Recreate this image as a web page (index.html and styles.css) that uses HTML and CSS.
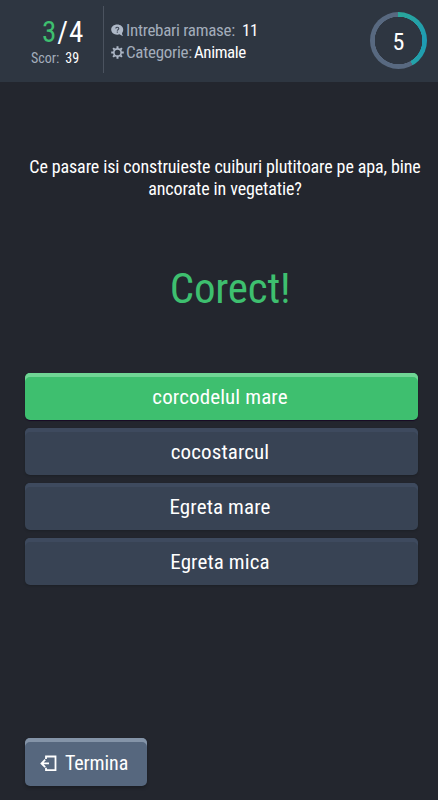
FILE: index.html
```html
<!DOCTYPE html>
<html lang="ro">
<head>
    <meta charset="UTF-8">
    <meta name="viewport" content="width=device-width, initial-scale=1.0">
    <title>Quiz</title>
    <link rel="stylesheet" href="styles.css">
</head>
<body>

    <header class="header">
        <div class="progress">
            <div class="count"><span class="current">3</span><span>/4</span></div>
            <div class="score"><span class="label">Scor:</span><span>39</span></div>
        </div>

        <div class="info">
            <div class="info-row">
                <svg class="icon" viewBox="0 0 13 13">
                    <path fill="#aeb8c7" d="M6.2.5C2.800.5.2 2.700.2 5.600s2.600 5.100 6 5.100c.9 0 1.700-.1 2.400-.4.9.9 2 1.500 3.600 1.500-.8-.7-1.200-1.500-1.200-2.600.8-.9 1.200-2.200 1.200-3.600C12.200 2.700 9.600.5 6.200.5z"/>
                    <path fill="none" stroke="#3d4654" stroke-width="1.1" d="M4.800 4.600c0-1.900 3-1.800 3 0 0 1.200-1.500 1-1.500 2.200M6.300 7.600v1.100"/>
                </svg>
                <span class="label">Intrebari ramase:</span>
                <span class="left">11</span>
            </div>
            <div class="info-row">
                <svg class="icon" viewBox="0 0 13 13">
                    <circle cx="6.5" cy="6.5" r="3.7" fill="none" stroke="#aeb8c7" stroke-width="1.7"/>
                    <path fill="none" stroke="#aeb8c7" stroke-width="2" d="M6.5.2v2M6.5 10.800v2M.2 6.500h2M10.800 6.500h2M2.100 2.100l1.400 1.400M9.500 9.500l1.400 1.400M2.100 10.900l1.400-1.400M9.500 3.500l1.400-1.400"/>
                </svg>
                <span class="label">Categorie:</span>
                <span class="name">Animale</span>
            </div>
        </div>

        <div class="timer">5</div>
    </header>

    <main class="quiz">
        <p class="question">Ce pasare isi construieste cuiburi plutitoare pe apa, bine<br>ancorate in vegetatie?</p>
        <h1 class="result">Corect!</h1>

        <div class="answers">
            <button class="answer correct">corcodelul mare</button>
            <button class="answer">cocostarcul</button>
            <button class="answer">Egreta mare</button>
            <button class="answer">Egreta mica</button>
        </div>

        <button class="finish">
            <svg class="exit" viewBox="0 0 17 17">
                <path fill="none" stroke="#fff" stroke-width="1.8" d="M6 4V1.500h9.500v13.700H6V12.700M9 8.400H1.500M5.200 4.700L1.500 8.400l3.700 3.700"/>
            </svg>
            <span>Termina</span>
        </button>
    </main>

</body>
</html>
```
FILE: styles.css
```css
* {
    box-sizing: border-box;
}
body {
    margin: 0;
    height: 800px;
    overflow: hidden;
    display: flex;
    flex-direction: column;
    background-color: #23262e;
    color: #fff;
    font-family: "Roboto Condensed", Roboto, sans-serif;
    font-stretch: 75%;
}
.header {
    display: flex;
    height: 82px;
    padding: 6px 11px 0 0;
    background-color: #2e3641;
}
.progress {
    width: 104px;
    height: 67px;
    padding: 8px 0 0 31px;
    border-right: 1px solid #4b535f;
}
.count {
    display: flex;
    padding-left: 11px;
    font-size: 29px;
    line-height: 36px;
    letter-spacing: 1px;
}
.current {
    color: #3ebf6f;
}
.score {
    display: flex;
    gap: 6px;
    font-size: 14px;
    line-height: 16px;
}
.label {
    color: #a3adbb;
}
.info {
    padding: 13px 0 0 7px;
    font-size: 17px;
    letter-spacing: -0.28px;
}
.info-row {
    display: flex;
    align-items: center;
    height: 22px;
}
.icon {
    width: 13px;
    height: 13px;
    margin-right: 2px;
}
.left {
    margin-left: 7px;
}
.name {
    margin-left: 2px;
    letter-spacing: -0.4px;
}
.timer {
    width: 57px;
    height: 57px;
    margin: 6px 0 0 auto;
    border-radius: 50%;
    background: radial-gradient(circle, #2e3641 23.5px, transparent 24px), conic-gradient(#2aa79a 0, #1e9bb4 90deg, #24a3a9 150deg, #586980 150deg);
    font-size: 24px;
    line-height: 60px;
    text-align: center;
}
.quiz {
    display: flex;
    flex-direction: column;
    flex: 1;
    padding: 0 20px 0 25px;
}
.question {
    margin: 74px -20px 0 -13px;
    font-size: 18px;
    line-height: 22px;
    letter-spacing: -0.11px;
    text-align: center;
    white-space: nowrap;
}
.result {
    margin: 60px 0 0 17px;
    height: 56px;
    color: #3ebf6f;
    font-size: 43px;
    font-weight: 400;
    line-height: 56px;
    letter-spacing: -0.2px;
    text-align: center;
}
.answers {
    display: flex;
    flex-direction: column;
    gap: 8px;
    margin-top: 57px;
}
.answer,
.finish {
    padding: 0;
    border: none;
    border-radius: 5px;
    color: #fff;
    font-family: inherit;
    font-stretch: inherit;
    font-size: 21px;
}
.answer {
    height: 47px;
    padding: 1px 3px 0 0;
    background-color: #384354;
    box-shadow: inset 0 4px #3e4a5e, 0 1px 2px #1d2026;
    letter-spacing: 0.12px;
}
.answer.correct {
    background-color: #3ebf6f;
    box-shadow: inset 0 4px #70d695, 0 1px 1px #180b25;
}
.finish {
    display: flex;
    align-items: center;
    width: 122px;
    height: 48px;
    margin: auto 0 14px;
    padding: 2px 0 0 15px;
    background-color: #56677e;
    box-shadow: inset 0 4px #8494a8, 0 2px 3px #1b1e24;
    font-size: 20px;
    letter-spacing: -0.1px;
}
.exit {
    width: 17px;
    height: 17px;
    margin-right: 8px;
}
```
